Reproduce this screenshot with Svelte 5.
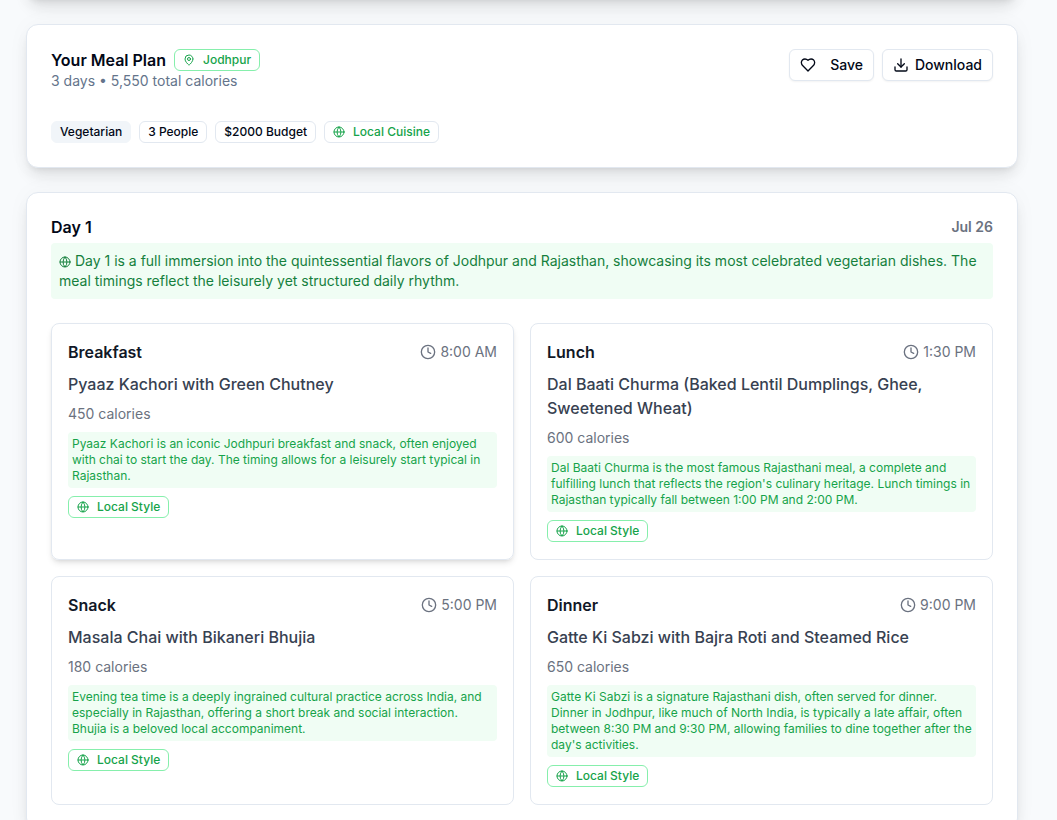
<script>
  const meals = [
    {
      name: 'Breakfast',
      time: '8:00 AM',
      dish: 'Pyaaz Kachori with Green Chutney',
      calories: 450,
      note: 'Pyaaz Kachori is an iconic Jodhpuri breakfast and snack, often enjoyed with chai to start the day. The timing allows for a leisurely start typical in Rajasthan.',
      raised: true
    },
    {
      name: 'Lunch',
      time: '1:30 PM',
      dish: 'Dal Baati Churma (Baked Lentil Dumplings, Ghee, Sweetened Wheat)',
      calories: 600,
      note: "Dal Baati Churma is the most famous Rajasthani meal, a complete and fulfilling lunch that reflects the region's culinary heritage. Lunch timings in Rajasthan typically fall between 1:00 PM and 2:00 PM."
    },
    {
      name: 'Snack',
      time: '5:00 PM',
      dish: 'Masala Chai with Bikaneri Bhujia',
      calories: 180,
      note: 'Evening tea time is a deeply ingrained cultural practice across India, and especially in Rajasthan, offering a short break and social interaction. Bhujia is a beloved local accompaniment.'
    },
    {
      name: 'Dinner',
      time: '9:00 PM',
      dish: 'Gatte Ki Sabzi with Bajra Roti and Steamed Rice',
      calories: 650,
      note: "Gatte Ki Sabzi is a signature Rajasthani dish, often served for dinner. Dinner in Jodhpur, like much of North India, is typically a late affair, often between 8:30 PM and 9:30 PM, allowing families to dine together after the day's activities."
    }
  ];
</script>

{#snippet globe()}
  <svg class="icon small" viewBox="0 0 24 24" aria-hidden="true">
    <circle cx="12" cy="12" r="10" />
    <path d="M12 2a14.5 14.5 0 0 0 0 20 14.5 14.5 0 0 0 0-20" />
    <path d="M2 12h20" />
  </svg>
{/snippet}

<main>
  <div class="card previous"></div>

  <section class="card">
    <header class="row top">
      <div>
        <div class="title-line">
          <h1>Your Meal Plan</h1>
          <span class="badge green outlined">
            <svg class="icon small" viewBox="0 0 24 24" aria-hidden="true">
              <path d="M20 10c0 4.993-5.539 10.193-7.399 11.799a1 1 0 0 1-1.202 0C9.539 20.193 4 14.993 4 10a8 8 0 0 1 16 0" />
              <circle cx="12" cy="10" r="3" />
            </svg>
            Jodhpur
          </span>
        </div>
        <p class="summary">3 days • 5,550 total calories</p>
      </div>
      <div class="actions">
        <button type="button" class="save">
          <svg class="icon" viewBox="0 0 24 24" aria-hidden="true">
            <path d="M19 14c1.49-1.46 3-3.21 3-5.5A5.5 5.5 0 0 0 16.5 3c-1.76 0-3 .5-4.5 2-1.5-1.5-2.74-2-4.5-2A5.5 5.5 0 0 0 2 8.5c0 2.3 1.5 4.05 3 5.5l7 7Z" />
          </svg>
          Save
        </button>
        <button type="button">
          <svg class="icon" viewBox="0 0 24 24" aria-hidden="true">
            <path d="M12 15V3" />
            <path d="M21 15v4a2 2 0 0 1-2 2H5a2 2 0 0 1-2-2v-4" />
            <path d="m7 10 5 5 5-5" />
          </svg>
          Download
        </button>
      </div>
    </header>
    <div class="tags">
      <span class="badge filled">Vegetarian</span>
      <span class="badge">3 People</span>
      <span class="badge">$2000 Budget</span>
      <span class="badge green">{@render globe()}Local Cuisine</span>
    </div>
  </section>

  <section class="card">
    <header class="row day">
      <h2>Day 1</h2>
      <span class="date">Jul 26</span>
    </header>
    <p class="overview">
      {@render globe()}
      Day 1 is a full immersion into the quintessential flavors of Jodhpur and Rajasthan, showcasing its most celebrated vegetarian dishes. The meal timings reflect the leisurely yet structured daily rhythm.
    </p>
    <div class="meals">
      {#each meals as meal}
        <article class="meal" class:raised={meal.raised}>
          <div class="row">
            <h3>{meal.name}</h3>
            <span class="time">
              <svg class="icon" viewBox="0 0 24 24" aria-hidden="true">
                <circle cx="12" cy="12" r="10" />
                <path d="M12 6v6l4 2" />
              </svg>
              {meal.time}
            </span>
          </div>
          <p class="dish">{meal.dish}</p>
          <p class="calories">{meal.calories} calories</p>
          <p class="note">{meal.note}</p>
          <span class="badge green outlined">{@render globe()}Local Style</span>
        </article>
      {/each}
    </div>
  </section>
</main>

<style>
  :global(body) {
    background: #f8fafc;
    color: #020817;
    font-family: Inter, 'Liberation Sans', sans-serif;
  }

  main {
    display: flex;
    flex-direction: column;
    gap: 24px;
    padding: 0 39px 24px 26px;
  }

  h1, h2, h3, p {
    margin: 0;
  }

  .card {
    padding: 24px;
    border: 1px solid #e2e8f0;
    border-radius: 12px;
    background: #fff;
    box-shadow: 0 10px 15px -3px rgb(0 0 0 / 0.1), 0 4px 6px -4px rgb(0 0 0 / 0.1), 0 0 24px rgb(0 0 0 / 0.03);
  }

  .previous {
    height: 150px;
    margin-top: -200px;
  }

  .row {
    display: flex;
    align-items: center;
    justify-content: space-between;
  }

  .top {
    align-items: flex-start;
    margin-bottom: 30px;
  }

  .title-line, .actions, .tags {
    display: flex;
    align-items: center;
    gap: 8px;
  }

  .tags {
    flex-wrap: wrap;
  }

  h1, h2 {
    font-size: 16px;
    font-weight: 600;
    line-height: 20px;
  }

  .summary {
    color: #64748b;
    font-size: 14px;
    line-height: 20px;
  }

  .icon {
    flex: none;
    width: 16px;
    height: 16px;
    fill: none;
    stroke: currentColor;
    stroke-width: 2;
    stroke-linecap: round;
    stroke-linejoin: round;
  }

  .small {
    width: 12px;
    height: 12px;
  }

  .badge {
    display: inline-flex;
    align-items: center;
    gap: 8px;
    padding: 2px 8px;
    border: 1px solid #e2e8f0;
    border-radius: 6px;
    font-size: 12px;
    font-weight: 500;
    line-height: 16px;
    white-space: nowrap;
  }

  .filled {
    border-color: #f1f5f9;
    background: #f1f5f9;
  }

  .green {
    color: #16a34a;
  }

  .outlined {
    border-color: #86efac;
  }

  button {
    display: inline-flex;
    align-items: center;
    gap: 6px;
    height: 32px;
    padding: 0 10px;
    border: 1px solid #e2e8f0;
    border-radius: 6px;
    background: #fff;
    box-shadow: 0 1px 2px rgb(0 0 0 / 0.05);
    color: #020817;
    font: 500 14px/20px Inter, 'Liberation Sans', sans-serif;
    cursor: pointer;
  }

  .save {
    gap: 14px;
  }

  .day {
    margin-bottom: 6px;
  }

  .date {
    color: #6b7280;
    font-size: 14px;
    font-weight: 600;
    line-height: 20px;
  }

  .overview {
    margin-bottom: 24px;
    padding: 8px;
    border-radius: 4px;
    background: #f0fdf4;
    color: #15803d;
    font-size: 14px;
    line-height: 20px;
  }

  .overview :global(.icon) {
    vertical-align: -2px;
  }

  .meals {
    display: grid;
    grid-template-columns: repeat(auto-fit, minmax(320px, 1fr));
    gap: 16px;
  }

  .meal {
    display: flex;
    flex-direction: column;
    align-items: stretch;
    gap: 8px;
    padding: 16px 16px 17px;
    border: 1px solid #e2e8f0;
    border-radius: 8px;
  }

  .meal .badge {
    align-self: flex-start;
  }

  .raised {
    box-shadow: 0 4px 6px -1px rgb(0 0 0 / 0.1), 0 2px 4px -2px rgb(0 0 0 / 0.1);
  }

  h3 {
    color: #111827;
    font-size: 16px;
    font-weight: 600;
    line-height: 24px;
  }

  .time {
    display: flex;
    align-items: center;
    gap: 4px;
    color: #6b7280;
    font-size: 14px;
    line-height: 20px;
  }

  .dish {
    color: #374151;
    font-weight: 500;
    font-size: 16px;
    line-height: 24px;
  }

  .calories {
    color: #6b7280;
    font-size: 14px;
    line-height: 20px;
  }

  .note {
    padding: 4px;
    border-radius: 4px;
    background: #f0fdf4;
    color: #16a34a;
    font-size: 12px;
    line-height: 16px;
  }
</style>
